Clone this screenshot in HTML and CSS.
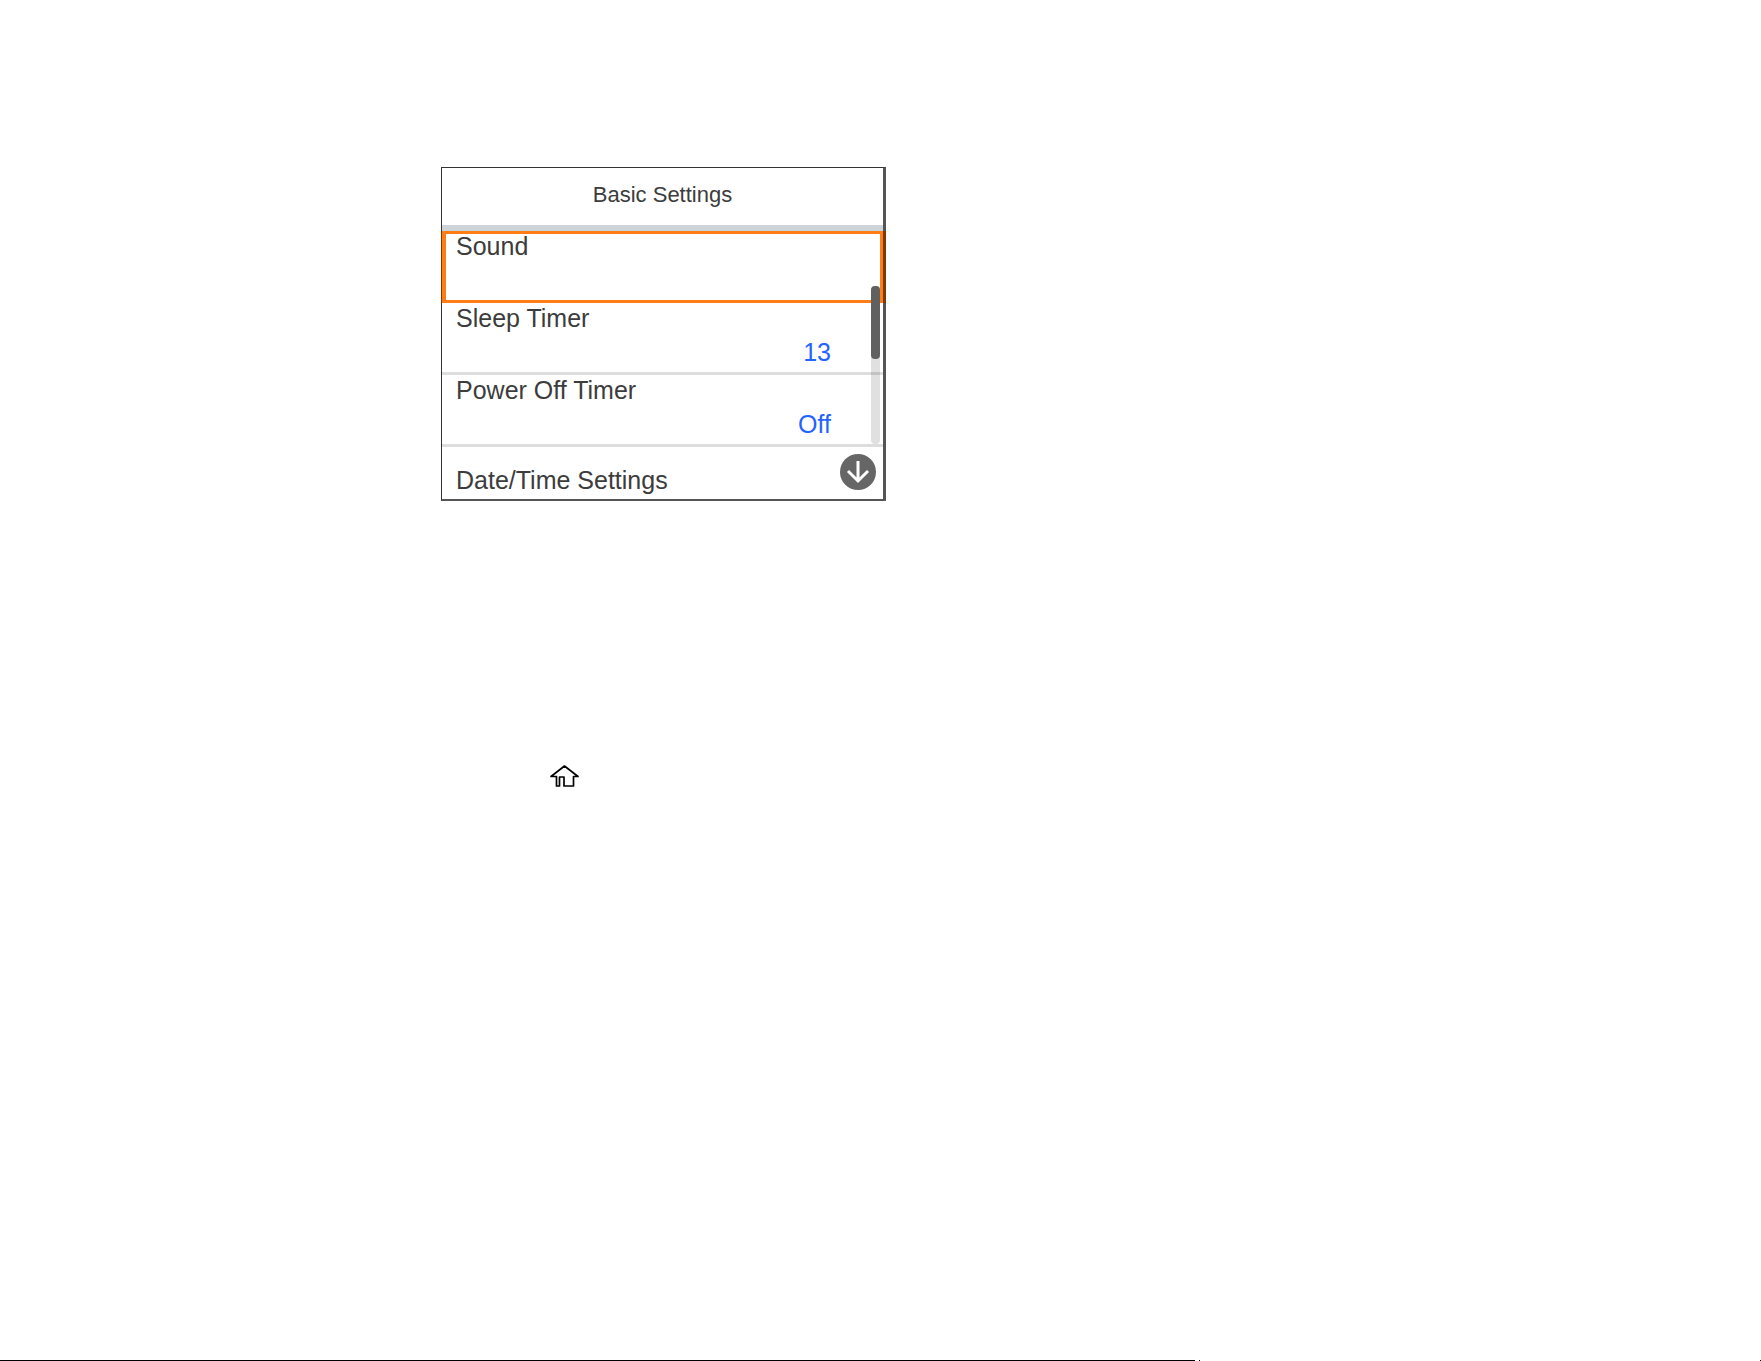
FILE: index.html
```html
<!DOCTYPE html>
<html lang="en">
<head>
  <meta charset="UTF-8" />
  <meta name="viewport" content="width=device-width, initial-scale=1" />
  <title>Basic Settings</title>
  <link rel="stylesheet" href="styles.css">
</head>
<body>
  <main class="content">
    <section class="screen">
      <h1 class="screen-title">Basic Settings</h1>
      <div class="menu">
        <button class="row selected"><span class="label">Sound</span></button>
        <button class="row"><span class="label">Sleep Timer</span><span class="value">13</span></button>
        <button class="row"><span class="label">Power Off Timer</span><span class="value">Off</span></button>
        <div class="scrollbar"><div class="thumb"></div></div>
      </div>
      <div class="last-row">
        <button class="row-last">Date/Time Settings</button>
        <button class="down-btn" aria-label="Scroll down">
          <svg width="36" height="36" viewBox="0 0 36 36">
            <circle cx="18" cy="18" r="18" fill="#666" />
            <path d="M18 7v20M8 17l10 10 10-10" fill="none" stroke="#fff" stroke-width="3" />
          </svg>
        </button>
      </div>
    </section>

    <a class="home" href="#" aria-label="Home">
      <svg width="31" height="24" viewBox="0 0 31 24">
        <path d="M15.500 2L2 12.500H7.500V22H10.500V13H15V22H24.500V12.500H29Z" fill="none" stroke="#000" stroke-width="1.700" stroke-linejoin="round" />
      </svg>
    </a>
  </main>

  <footer class="page-end">
    <div class="rule"></div>
    <div class="dot"></div>
    <div class="dot last"></div>
  </footer>
</body>
</html>
```
FILE: styles.css
```css
:root {
  --orange: #ff7d14;
  --brown: #7a3a00;
  --blue: #2563ff;
  --text: #3c3c3c;
  --line: #ddd;
}
* {
  box-sizing: border-box;
  margin: 0;
  padding: 0;
  font-family: "Liberation Sans", Arial, sans-serif;
}
body {
  background: #fff;
  color: var(--text);
  min-height: 100vh;
  display: flex;
  flex-direction: column;
}
button {
  background: none;
  border: none;
  color: inherit;
  text-align: left;
  cursor: pointer;
}
.content {
  flex: 1;
  padding: 167px 0 0 441px;
}

/* ───── Printer screen ───── */
.screen {
  max-width: 445px;
  border: 1px solid #333;
  border-right: 3px solid #555;
  border-bottom: 2px solid #555;
}
.screen-title {
  border-bottom: 6px solid #cdd3d8;
  padding: 14px 0 17px;
  text-align: center;
  font-size: 22px;
  line-height: 26px;
  font-weight: normal;
}
.menu {
  position: relative;
}
.row {
  display: flex;
  flex-direction: column;
  width: 100%;
  height: 72px;
  padding: 3px 52px 0 14px;
  border-bottom: 3px solid var(--line);
  font-size: 25px;
  line-height: 24px;
}
.row.selected {
  padding: 0 10px;
  border: 3px solid var(--orange);
  border-left-width: 4px;
  box-shadow: -1px 0 var(--brown), 3px 0 var(--brown);
}
.value {
  margin-top: 10px;
  align-self: flex-end;
  color: var(--blue);
}

/* ───── Scrollbar over the rows ───── */
.scrollbar {
  position: absolute;
  top: 55px;
  right: 3px;
  bottom: 3px;
  width: 9px;
  border-radius: 4px;
  background: rgba(0, 0, 0, 0.12);
}
.thumb {
  height: 73px;
  border-radius: 4px;
  background: #606060;
}

/* ───── Bottom row ───── */
.last-row {
  display: flex;
  justify-content: space-between;
  padding: 7px 7px 9px 14px;
}
.row-last {
  padding-top: 16px;
  font-size: 25px;
  line-height: 20px;
}
.down-btn,
.down-btn svg {
  display: block;
  height: 36px;
}

.home {
  display: inline-block;
  margin: 263px 0 0 108px;
}
.home svg {
  display: block;
}

/* ───── Page end rule ───── */
.page-end {
  display: flex;
  gap: 4px;
}
.rule {
  flex: 1;
  height: 1px;
  background: #000;
}
.dot {
  width: 1px;
  height: 1px;
  background: #000;
}
.dot.last {
  margin-left: 556px;
}
```
